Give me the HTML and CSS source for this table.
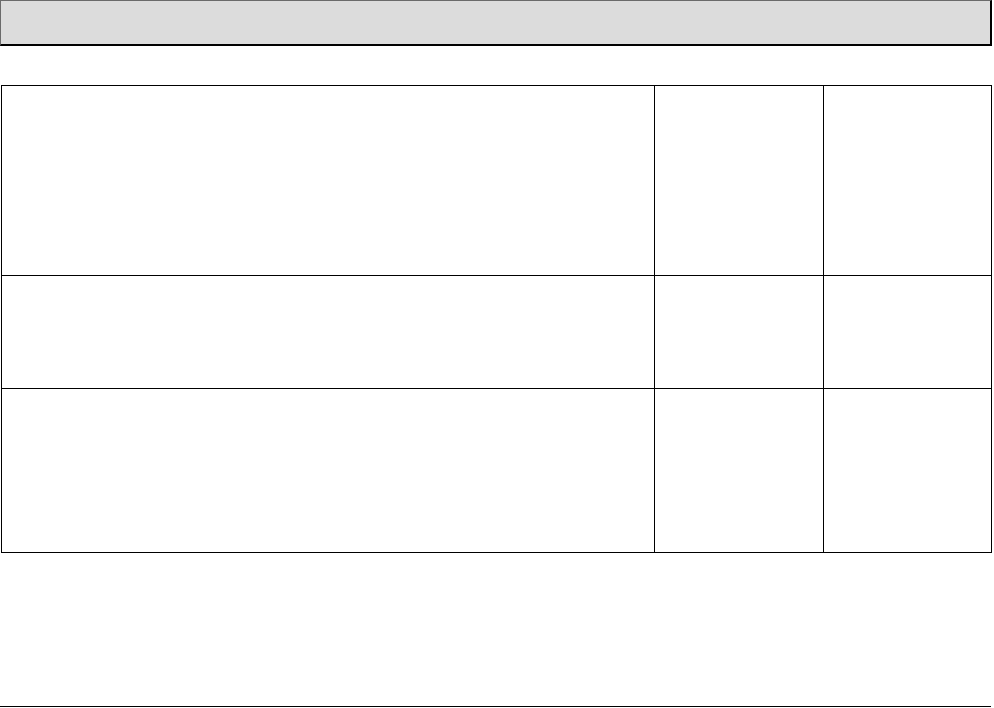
FILE: index.html
```html
<!DOCTYPE html>
<html>
<head>
<meta charset="utf-8">
<link rel="stylesheet" href="styles.css">
</head>
<body>
<div class="page">
  <div class="banner"></div>
  <table class="grid">
    <tr class="r1"><td class="c1"></td><td class="c2"></td><td class="c3"></td></tr>
    <tr class="r2"><td class="c1"></td><td class="c2"></td><td class="c3"></td></tr>
    <tr class="r3"><td class="c1"></td><td class="c2"></td><td class="c3"></td></tr>
  </table>
  <div class="footer-rule"></div>
</div>
</body>
</html>
```
FILE: styles.css
```css
html, body {
  margin: 0;
  padding: 0;
  background: #fff;
  font-family: "Liberation Sans", Arial, sans-serif;
}
.page {
  display: flex;
  flex-direction: column;
  width: 994px;
  height: 708px;
}
.banner {
  box-sizing: border-box;
  width: 992px;
  height: 46px;
  background: #dcdcdc;
  border-top: 1px solid #6a6a6a;
  border-left: 1px solid #6a6a6a;
  border-right: 2px solid #000;
  border-bottom: 2px solid #000;
}
.grid {
  margin-top: 39px;
  margin-left: 1px;
  width: 991px;
  border-collapse: collapse;
  table-layout: fixed;
}
.grid td {
  box-sizing: border-box;
  border: 1.5px solid #000;
  padding: 0;
}
.c1 { width: 653px; }
.c2 { width: 169px; }
.r1 td { height: 190px; }
.r2 td { height: 113px; }
.r3 td { height: 164px; }
.footer-rule {
  margin-top: auto;
  margin-bottom: 1px;
  width: 991px;
  height: 0;
  border-top: 1.5px solid #000;
}
```
